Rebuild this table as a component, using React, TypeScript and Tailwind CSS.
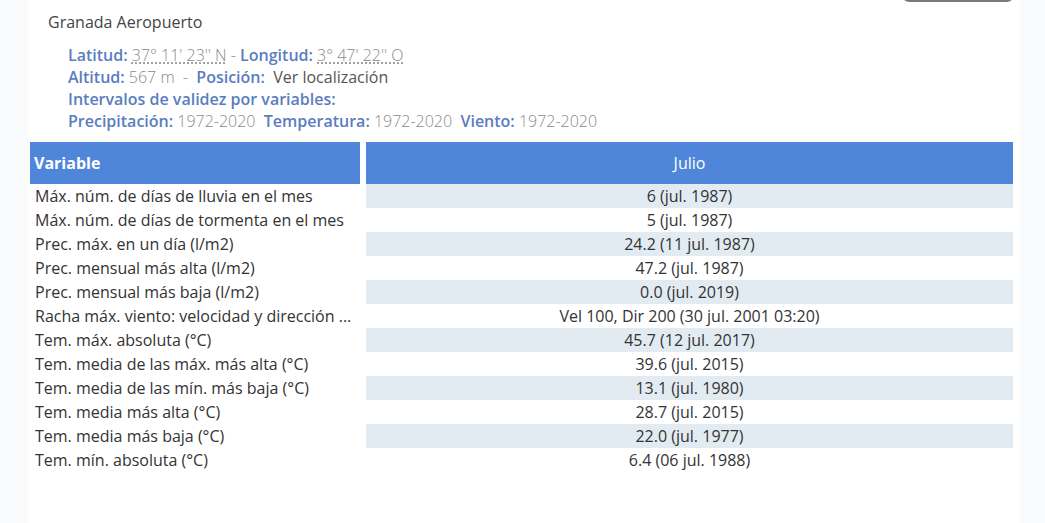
const rows: [string, string][] = [
  ['Máx. núm. de días de lluvia en el mes', '6 (jul. 1987)'],
  ['Máx. núm. de días de tormenta en el mes', '5 (jul. 1987)'],
  ['Prec. máx. en un día (l/m2)', '24.2 (11 jul. 1987)'],
  ['Prec. mensual más alta (l/m2)', '47.2 (jul. 1987)'],
  ['Prec. mensual más baja (l/m2)', '0.0 (jul. 2019)'],
  ['Racha máx. viento: velocidad y dirección ...', 'Vel 100, Dir 200 (30 jul. 2001 03:20)'],
  ['Tem. máx. absoluta (°C)', '45.7 (12 jul. 2017)'],
  ['Tem. media de las máx. más alta (°C)', '39.6 (jul. 2015)'],
  ['Tem. media de las mín. más baja (°C)', '13.1 (jul. 1980)'],
  ['Tem. media más alta (°C)', '28.7 (jul. 2015)'],
  ['Tem. media más baja (°C)', '22.0 (jul. 1977)'],
  ['Tem. mín. absoluta (°C)', '6.4 (06 jul. 1988)'],
];

const Label = ({ children }: { children: React.ReactNode }) => (
  <span className="font-semibold text-[#5a7dc0]">{children}</span>
);

const Value = ({ children }: { children: React.ReactNode }) => (
  <span className="font-light text-[#8a8a8a]">{children}</span>
);

export default function App() {
  return (
    <div className="min-h-screen bg-[#fafbfc] font-['Open_Sans',sans-serif]">
      <div className="ml-[28px] w-[992px] min-h-[523px] bg-white px-[2px]">
        {/* partially scrolled button */}
        <div className="flex justify-end pr-[5px]">
          <div className="-mt-[28px] h-[30px] w-[110px] rounded-md bg-[#7a7a7a]" />
        </div>

        <div className="mt-[8px] pl-[18px] text-[16px] leading-[24px] text-[#444]">Granada Aeropuerto</div>

        <div className="mt-[10px] pl-[38px] text-[16px] leading-[22px]">
          <div>
            <Label>Latitud:</Label>{' '}
            <abbr className="font-light text-[#8a8a8a] underline decoration-dotted underline-offset-2">37° 11' 23'' N</abbr>
            <Value> - </Value>
            <Label>Longitud:</Label>{' '}
            <abbr className="font-light text-[#8a8a8a] underline decoration-dotted underline-offset-2">3° 47' 22'' O</abbr>
          </div>
          <div className="whitespace-pre">
            <Label>Altitud:</Label> <Value>567 m  -  </Value>
            <Label>Posición:</Label>  <span className="text-[#555]">Ver localización</span>
          </div>
          <div>
            <Label>Intervalos de validez por variables:</Label>
          </div>
          <div className="whitespace-pre">
            <Label>Precipitación:</Label> <Value>1972-2020  </Value>
            <Label>Temperatura:</Label> <Value>1972-2020  </Value>
            <Label>Viento:</Label> <Value>1972-2020</Value>
          </div>
        </div>

        <div className="mt-[10px] grid grid-cols-[330px_647px] gap-x-[6px] text-[16px] text-[#333]">
          <div className="flex h-[42px] items-center bg-[#4f86d9] px-[4px] font-bold text-white">Variable</div>
          <div className="flex h-[42px] items-center justify-center bg-[#4f86d9] text-white">Julio</div>
          {rows.map(([name, value], i) => (
            <div key={name} className="contents">
              <div className="h-[24px] truncate px-[5px] leading-[24px]">{name}</div>
              <div className={`h-[24px] text-center leading-[24px] ${i % 2 === 0 ? 'bg-[#e3ebf2]' : ''}`}>{value}</div>
            </div>
          ))}
        </div>
      </div>
    </div>
  );
}
